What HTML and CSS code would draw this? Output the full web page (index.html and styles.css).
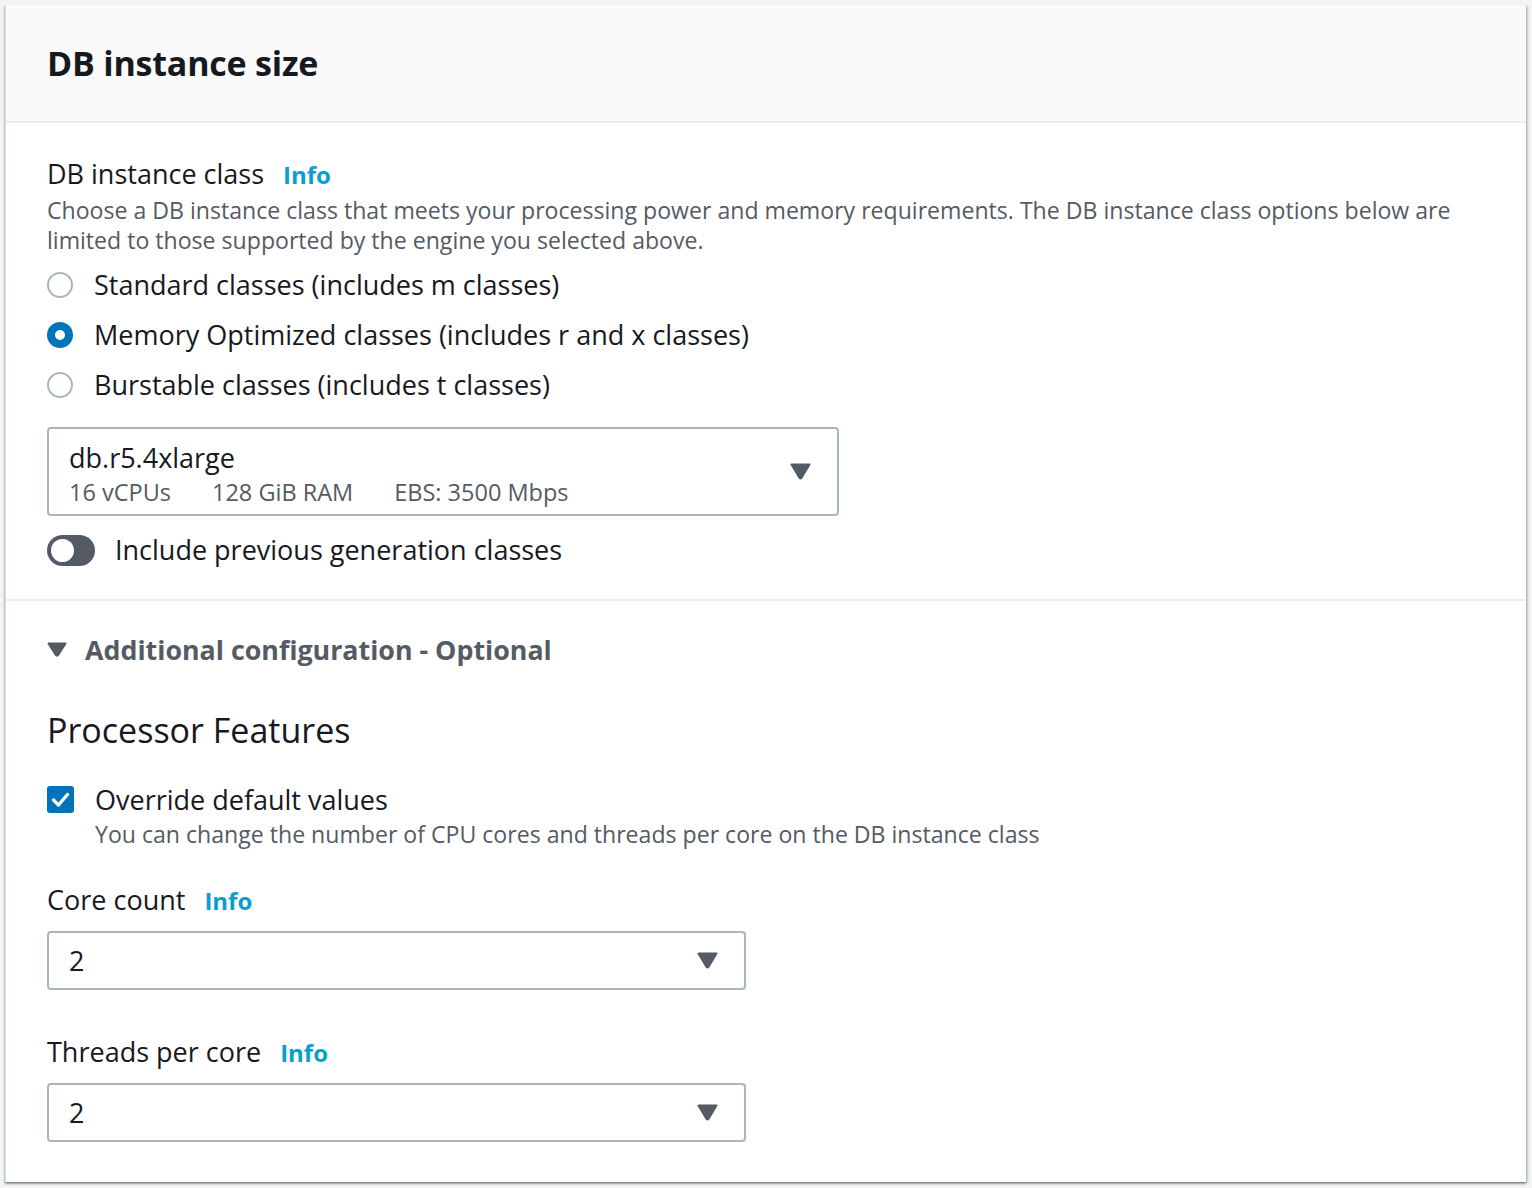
FILE: index.html
```html
<!DOCTYPE html>
<html>
<head>
<meta charset="utf-8">
<link rel="stylesheet" href="styles.css">
</head>
<body>
<div class="card">
  <div class="card-header"><h2 class="title">DB instance size</h2></div>
  <div class="section">
    <div class="label-row"><span class="label">DB instance class</span><span class="info">Info</span></div>
    <div class="desc">Choose a DB instance class that meets your processing power and memory requirements. The DB instance class options below are limited to those supported by the engine you selected above.</div>
    <div class="radios">
      <div class="radio-row"><span class="radio"></span><span class="opt">Standard classes (includes m classes)</span></div>
      <div class="radio-row"><span class="radio checked"></span><span class="opt">Memory Optimized classes (includes r and x classes)</span></div>
      <div class="radio-row"><span class="radio"></span><span class="opt">Burstable classes (includes t classes)</span></div>
    </div>
    <div class="select big">
      <div class="sel-text">
        <div class="sel-main">db.r5.4xlarge</div>
        <div class="sel-tags"><span>16 vCPUs</span><span>128 GiB RAM</span><span>EBS: 3500 Mbps</span></div>
      </div>
      <svg class="caret" width="21" height="17" viewBox="0 0 21 17"><path d="M1.5 1.5 L19.5 1.5 L11.6 14.8 Q10.5 16.4 9.4 14.8 Z" fill="#545b64" stroke="#545b64" stroke-width="2" stroke-linejoin="round"/></svg>
    </div>
    <div class="toggle-row"><span class="toggle"><span class="knob"></span></span><span class="opt">Include previous generation classes</span></div>
  </div>
  <div class="section second">
    <div class="expander"><svg class="exp-caret" width="20" height="15" viewBox="0 0 20 15"><path d="M1.5 1.5 L18.5 1.5 L11.2 13 Q10 14.5 8.8 13 Z" fill="#545b64" stroke="#545b64" stroke-width="2" stroke-linejoin="round"/></svg><span class="exp-text">Additional configuration - Optional</span></div>
    <h3 class="sub">Processor Features</h3>
    <div class="check-row">
      <span class="checkbox"><svg width="27" height="27" viewBox="0 0 27 27"><path d="M6.5 14 L11.5 19 L20.5 8.5" fill="none" stroke="#fff" stroke-width="3.4" stroke-linecap="round" stroke-linejoin="round"/></svg></span>
      <div>
        <div class="opt">Override default values</div>
        <div class="desc">You can change the number of CPU cores and threads per core on the DB instance class</div>
      </div>
    </div>
    <div class="label-row field-label"><span class="label">Core count</span><span class="info">Info</span></div>
    <div class="select small">
      <span class="sel-main">2</span>
      <svg class="caret" width="21" height="17" viewBox="0 0 21 17"><path d="M1.5 1.5 L19.5 1.5 L11.6 14.8 Q10.5 16.4 9.4 14.8 Z" fill="#545b64" stroke="#545b64" stroke-width="2" stroke-linejoin="round"/></svg>
    </div>
    <div class="label-row field-label two"><span class="label">Threads per core</span><span class="info">Info</span></div>
    <div class="select small">
      <span class="sel-main">2</span>
      <svg class="caret" width="21" height="17" viewBox="0 0 21 17"><path d="M1.5 1.5 L19.5 1.5 L11.6 14.8 Q10.5 16.4 9.4 14.8 Z" fill="#545b64" stroke="#545b64" stroke-width="2" stroke-linejoin="round"/></svg>
    </div>
  </div>
</div>
</body>
</html>
```
FILE: styles.css
```css
html, body {
  margin: 0;
  padding: 0;
  background: #f2f3f3;
}
body {
  font-family: "Open Sans", "Noto Sans", sans-serif;
  color: #16191f;
  padding: 5px 5px 5px 5px;
}
.card {
  background: #fff;
  width: 1521px;
  box-sizing: border-box;
  border-left: 1px solid #dfe3e3;
  box-shadow: 0 2px 2px 0 rgba(0, 28, 36, 0.35), 2px 1px 2px 0 rgba(0, 28, 36, 0.18), -1px 1px 1px 0 rgba(0, 28, 36, 0.12);
}
.card-header {
  background: #fafafa;
  height: 118px;
  border-bottom: 2px solid #eaeded;
  box-sizing: border-box;
  display: flex;
  align-items: center;
  padding-left: 41px;
}
.title {
  margin: 0;
  font-size: 34px;
  font-weight: 700;
  letter-spacing: -0.2px;
}
.section {
  padding: 34px 41px 32px 41px;
}
.section.second {
  border-top: 2px solid #eaeded;
  padding-top: 28px;
  padding-bottom: 40px;
}
.label-row {
  display: flex;
  align-items: baseline;
  gap: 19px;
  height: 34px;
  line-height: 34px;
}
.label {
  font-size: 27px;
}
.info {
  font-size: 24px;
  font-weight: 700;
  color: #0a9ecf;
}
.desc {
  font-size: 23.1px;
  line-height: 30px;
  color: #545b64;
  margin-top: 4px;
}
.radios {
  margin-top: 5px;
}
.radio-row {
  display: flex;
  align-items: center;
  height: 50px;
  gap: 21px;
}
.opt {
  font-size: 27px;
  line-height: 34px;
}
.radio {
  width: 26px;
  height: 26px;
  border-radius: 50%;
  border: 2px solid #aab7b8;
  box-sizing: border-box;
  flex: none;
}
.radio.checked {
  border: 8px solid #0073bb;
}
.select {
  border: 2px solid #aab7b8;
  border-radius: 4px;
  box-sizing: border-box;
  display: flex;
  align-items: center;
  justify-content: space-between;
  padding: 0 26px 0 20px;
}
.select.big {
  width: 792px;
  height: 89px;
  margin-top: 17px;
}
.select.small {
  width: 699px;
  height: 59px;
  margin-top: 14px;
}
.sel-main {
  font-size: 27px;
  line-height: 34px;
}
.sel-tags {
  display: flex;
  gap: 41px;
  font-size: 23.5px;
  line-height: 34px;
  color: #545b64;
}
.sel-text {
  padding-top: 6px;
}
.caret {
  display: block;
  flex: none;
}
.toggle-row {
  display: flex;
  align-items: center;
  gap: 20px;
  margin-top: 17px;
  height: 34px;
}
.toggle {
  width: 48px;
  height: 31px;
  border-radius: 16px;
  background: #545b64;
  position: relative;
  flex: none;
}
.knob {
  position: absolute;
  left: 4px;
  top: 4px;
  width: 23px;
  height: 23px;
  border-radius: 50%;
  background: #fff;
}
.expander {
  display: flex;
  align-items: center;
  gap: 18px;
  height: 40px;
}
.exp-caret {
  display: block;
  flex: none;
}
.exp-text {
  font-size: 26.8px;
  font-weight: 700;
  color: #545b64;
}
.sub {
  margin: 39px 0 0 0;
  font-size: 34px;
  font-weight: 400;
  line-height: 44px;
  height: 44px;
}
.check-row {
  display: flex;
  align-items: flex-start;
  gap: 21px;
  margin-top: 31px;
}
.check-row .desc {
  margin-top: 2px;
}
.checkbox {
  width: 27px;
  height: 27px;
  border-radius: 3px;
  background: #0073bb;
  flex: none;
  margin-top: 3px;
  display: flex;
}
.field-label {
  margin-top: 34px;
}
.field-label.two {
  margin-top: 45px;
}
```
